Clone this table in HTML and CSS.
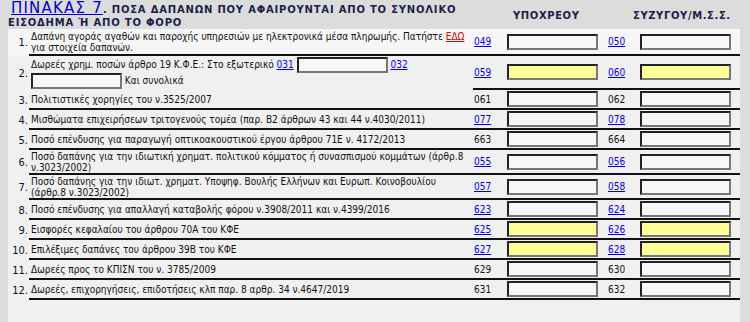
FILE: index.html
```html
<!DOCTYPE html>
<html lang="el">
<head>
    <meta charset="UTF-8">
    <title>Πίνακας 7</title>
    <link rel="stylesheet" href="styles.css">
</head>
<body>
    <div class="table-head">
        <div class="title">
            <div class="title-top"><a href="#" class="table-no">ΠΙΝΑΚΑΣ 7</a>. ΠΟΣΑ ΔΑΠΑΝΩΝ ΠΟΥ ΑΦΑΙΡΟΥΝΤΑΙ ΑΠΟ ΤΟ ΣΥΝΟΛΙΚΟ</div>
            <div class="title-bottom">ΕΙΣΟΔΗΜΑ Ή ΑΠΟ ΤΟ ΦΟΡΟ</div>
        </div>
        <div class="col-head col-main">ΥΠΟΧΡΕΟΥ</div>
        <div class="col-head col-spouse">ΣΥΖΥΓΟΥ/Μ.Σ.Σ.</div>
    </div>

    <div class="panel">
        <div class="row r-27 light">
            <div class="num">1.</div>
            <div class="label"><span>Δαπάνη αγοράς αγαθών και παροχής υπηρεσιών με ηλεκτρονικά μέσα πληρωμής. Πατήστε <a href="#" class="here">ΕΔΩ</a> για στοιχεία δαπανών.</span></div>
            <div class="code"><a href="#">049</a></div>
            <div class="field"><input type="text"></div>
            <div class="code2"><a href="#">050</a></div>
            <div class="field2"><input type="text"></div>
        </div>
        <div class="row r-34">
            <div class="num">2.</div>
            <div class="label plain"><span>Δωρεές χρημ. ποσών άρθρο 19 Κ.Φ.Ε.: Στο εξωτερικό <a href="#">031</a> <input type="text" class="inline"> <a href="#">032</a><br><input type="text" class="inline"> Και συνολικά</span></div>
            <div class="code"><a href="#">059</a></div>
            <div class="field"><input type="text" class="yellow"></div>
            <div class="code2"><a href="#">060</a></div>
            <div class="field2"><input type="text" class="yellow"></div>
        </div>
        <div class="row">
            <div class="num">3.</div>
            <div class="label">Πολιτιστικές χορηγίες του ν.3525/2007</div>
            <div class="code">061</div>
            <div class="field"><input type="text"></div>
            <div class="code2">062</div>
            <div class="field2"><input type="text"></div>
        </div>
        <div class="row">
            <div class="num">4.</div>
            <div class="label">Μισθώματα επιχειρήσεων τριτογενούς τομέα (παρ. Β2 άρθρων 43 και 44 ν.4030/2011)</div>
            <div class="code"><a href="#">077</a></div>
            <div class="field"><input type="text"></div>
            <div class="code2"><a href="#">078</a></div>
            <div class="field2"><input type="text"></div>
        </div>
        <div class="row">
            <div class="num">5.</div>
            <div class="label">Ποσό επένδυσης για παραγωγή οπτικοακουστικού έργου άρθρου 71Ε ν. 4172/2013</div>
            <div class="code">663</div>
            <div class="field"><input type="text"></div>
            <div class="code2">664</div>
            <div class="field2"><input type="text"></div>
        </div>
        <div class="row r-25">
            <div class="num">6.</div>
            <div class="label"><span>Ποσό δαπάνης για την ιδιωτική χρηματ. πολιτικού κόμματος ή συνασπισμού κομμάτων (άρθρ.8 ν.3023/2002)</span></div>
            <div class="code"><a href="#">055</a></div>
            <div class="field"><input type="text"></div>
            <div class="code2"><a href="#">056</a></div>
            <div class="field2"><input type="text"></div>
        </div>
        <div class="row r-25">
            <div class="num">7.</div>
            <div class="label"><span>Ποσό δαπάνης για την ιδιωτ. χρηματ. Υποψηφ. Βουλής Ελλήνων και Ευρωπ. Κοινοβουλίου (άρθρ.8 ν.3023/2002)</span></div>
            <div class="code"><a href="#">057</a></div>
            <div class="field"><input type="text"></div>
            <div class="code2"><a href="#">058</a></div>
            <div class="field2"><input type="text"></div>
        </div>
        <div class="row">
            <div class="num">8.</div>
            <div class="label">Ποσό επένδυσης για απαλλαγή καταβολής φόρου ν.3908/2011 και ν.4399/2016</div>
            <div class="code"><a href="#">623</a></div>
            <div class="field"><input type="text"></div>
            <div class="code2"><a href="#">624</a></div>
            <div class="field2"><input type="text"></div>
        </div>
        <div class="row">
            <div class="num">9.</div>
            <div class="label">Εισφορές κεφαλαίου του άρθρου 70Α του ΚΦΕ</div>
            <div class="code"><a href="#">625</a></div>
            <div class="field"><input type="text" class="yellow"></div>
            <div class="code2"><a href="#">626</a></div>
            <div class="field2"><input type="text" class="yellow"></div>
        </div>
        <div class="row">
            <div class="num">10.</div>
            <div class="label">Επιλέξιμες δαπάνες του άρθρου 39Β του ΚΦΕ</div>
            <div class="code"><a href="#">627</a></div>
            <div class="field"><input type="text" class="yellow"></div>
            <div class="code2"><a href="#">628</a></div>
            <div class="field2"><input type="text" class="yellow"></div>
        </div>
        <div class="row">
            <div class="num">11.</div>
            <div class="label">Δωρεές προς το ΚΠΙΣΝ του ν. 3785/2009</div>
            <div class="code">629</div>
            <div class="field"><input type="text"></div>
            <div class="code2">630</div>
            <div class="field2"><input type="text"></div>
        </div>
        <div class="row">
            <div class="num">12.</div>
            <div class="label">Δωρεές, επιχορηγήσεις, επιδοτήσεις κλπ παρ. 8 αρθρ. 34 ν.4647/2019</div>
            <div class="code">631</div>
            <div class="field"><input type="text"></div>
            <div class="code2">632</div>
            <div class="field2"><input type="text"></div>
        </div>
    </div>
</body>
</html>
```

FILE: styles.css
```css
body {
    margin: 0;
    background: #dcdcdc;
    font-family: "DejaVu Sans Condensed", "DejaVu Sans", sans-serif;
    font-size: 10px;
    color: #111;
    height: 322px;
    overflow: hidden;
}

a {
    color: #0000ee;
}

/* επικεφαλίδα πίνακα */
.table-head {
    display: flex;
    height: 29px;
}

.title {
    width: 505px;
    padding-left: 8px;
    box-sizing: border-box;
    font-family: "DejaVu Sans", sans-serif;
    font-weight: bold;
    color: #1b1f4a;
    letter-spacing: 0.8px;
}

.title-top {
    height: 17px;
    line-height: 17px;
    white-space: nowrap;
}

.title-bottom {
    line-height: 11px;
}

.table-no {
    margin-left: 3px;
    font-size: 15px;
    color: #0000cc;
    font-weight: normal;
    letter-spacing: 1.2px;
}

.col-head {
    font-family: "DejaVu Sans", sans-serif;
    font-weight: bold;
    color: #1b1f4a;
    padding-top: 10px;
    letter-spacing: 0.6px;
}

.col-main {
    width: 128px;
    padding-left: 8px;
    box-sizing: border-box;
}

/* γραμμές πίνακα */
.panel {
    margin-left: 8px;
    width: 732px;
    height: 293px;
    background: #f0f0f0;
}

.row {
    display: flex;
    height: 20px;
}

.row.r-27 { height: 27px; }
.row.r-34 { height: 34px; }
.row.r-25 { height: 25px; }
.row.light { background: #f6f6f6; }

.row > div {
    display: flex;
    align-items: center;
    box-sizing: border-box;
    border-bottom: 2px solid #111;
    line-height: 11px;
}

.row > .num {
    width: 21px;
    justify-content: flex-end;
    padding-right: 1px;
    border-bottom: none;
    font-size: 11px;
}

.label {
    width: 444px;
    padding-left: 2px;
}

.row > .label.plain {
    border-bottom: none;
    line-height: 16px;
}

.code {
    width: 34px;
    padding-left: 1px;
}

.field {
    width: 93px;
}

.code2 {
    width: 40px;
    padding-left: 8px;
}

.field2 {
    width: 100px;
}

input {
    width: 91px;
    height: 16px;
    box-sizing: border-box;
    margin: 0;
    padding: 0;
    background: #f7f7f7;
    border: 2px solid;
    border-color: #222 #777 #777 #222;
    font: inherit;
}

input.yellow {
    background: #ffff99;
}

input.inline {
    vertical-align: middle;
}

.here {
    color: #e00000;
}
```
